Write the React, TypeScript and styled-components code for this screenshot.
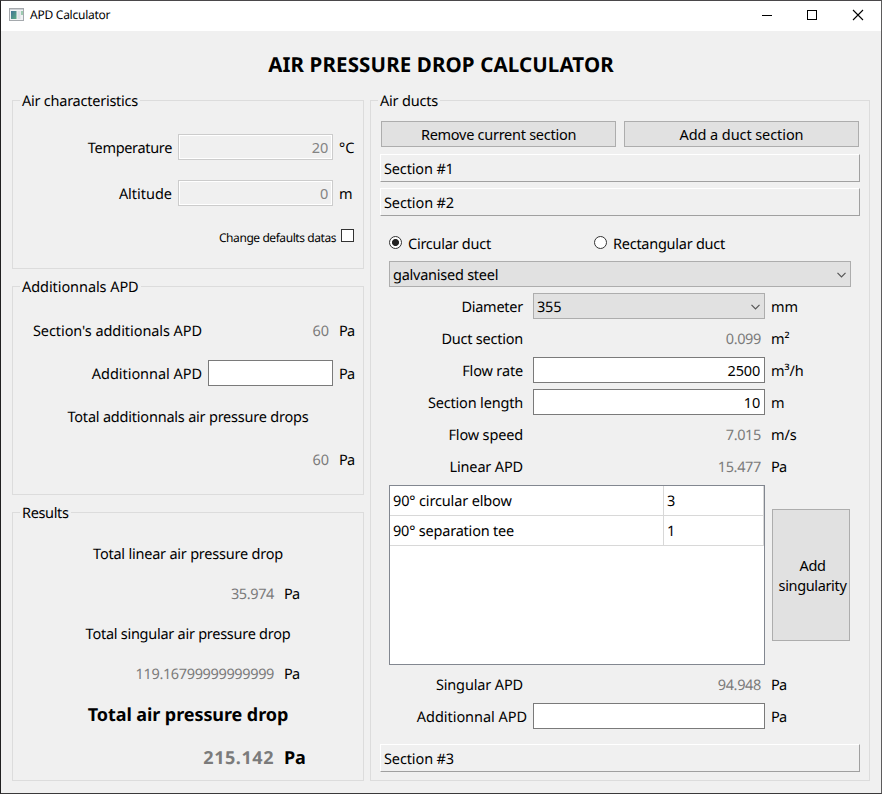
import React from "react";
import styled, { createGlobalStyle } from "styled-components";

const GlobalStyle = createGlobalStyle`
  * { box-sizing: border-box; }
  body {
    margin: 0;
    background: #f0f0f0;
    color: #000;
    font-family: "Noto Sans", "Open Sans", sans-serif;
    font-size: 14.5px;
    text-rendering: geometricPrecision;
  }
`;

const Window = styled.div`
  display: flex;
  flex-direction: column;
  width: 882px;
  height: 794px;
  border: 1px solid;
  border-color: #4a484a #5c5b5c #3a393a #201f20;
  background: #f0f0f0;
  overflow: hidden;
`;

const TitleBar = styled.header`
  display: flex;
  align-items: flex-start;
  flex: none;
  height: 30px;
  padding-left: 8px;
  background: #fff;
  font-size: 12px;
  line-height: 28px;
`;

const AppIcon = styled.svg`
  display: block;
  width: 15px;
  height: 13px;
  margin: 7px 6px 0 0;
`;

const WindowControls = styled.svg`
  display: block;
  margin-left: auto;
  width: 138px;
  height: 30px;
`;

const Text = styled.span<{ $track?: number }>`
  white-space: nowrap;
  letter-spacing: ${(p) => p.$track ?? -0.07}px;
`;

const Heading = styled.h1`
  flex: none;
  height: 69px;
  margin: 0;
  line-height: 69px;
  text-align: center;
  font-size: 20.5px;
  font-weight: 700;
`;

const Columns = styled.main`
  display: flex;
  gap: 6px;
  padding-left: 11px;
`;

const LeftColumn = styled.div`
  display: flex;
  flex-direction: column;
  gap: 17px;
  width: 352px;
`;

const Group = styled.section<{ $height: number; $width: number }>`
  display: flex;
  flex-direction: column;
  width: ${(p) => p.$width}px;
  height: ${(p) => p.$height}px;
  border: 1px solid #dcdcdc;
`;

const Legend = styled.h2<{ $space: number }>`
  align-self: flex-start;
  flex: none;
  height: 20px;
  margin: -10px 0 ${(p) => p.$space}px 7px;
  padding: 0 2px;
  background: #f0f0f0;
  font-size: inherit;
  font-weight: 400;
  line-height: 20px;
`;

const Fields = styled.div<{ $gap: number }>`
  display: flex;
  flex-direction: column;
  gap: ${(p) => p.$gap}px;
`;

const Row = styled.div<{ $cols: string }>`
  display: grid;
  grid-template-columns: ${(p) => p.$cols};
  column-gap: 6px;
  align-items: center;
  height: 26px;
  line-height: 24px;
  & > span, & > label, & > output { padding-top: 2px; }
`;

const Label = styled.label<{ $inset?: number }>`
  padding-right: ${(p) => p.$inset ?? 0}px;
  text-align: right;
  white-space: nowrap;
`;

const Output = styled.output`
  padding-right: 4px;
  color: #7b7b7b;
  text-align: right;
  white-space: nowrap;
`;

const Input = styled.input`
  width: 100%;
  height: 26px;
  padding: 0 4px;
  border: 1px solid #7a7a7a;
  border-radius: 0;
  outline: none;
  background: #fff;
  color: #000;
  font: inherit;
  letter-spacing: -0.2px;
  text-align: right;
  &:disabled {
    border-color: #cccccc;
    background: #f0f0f0;
    box-shadow: inset 0 0 0 1px #fff;
    color: #838383;
  }
`;

const Caption = styled.div`
  height: 26px;
  line-height: 28px;
  text-align: center;
`;

const CheckRow = styled.label`
  display: flex;
  align-items: center;
  justify-content: flex-end;
  gap: 5px;
  height: 26px;
  margin: 17px 9px 0 0;
  font-size: 12px;
  & > span { padding-top: 2px; }
`;

const CheckBox = styled.input`
  appearance: none;
  width: 13px;
  height: 13px;
  margin: 0 0 1px;
  border: 1px solid #333;
  background: #fff;
`;

const Results = styled.div`
  display: grid;
  grid-template-rows: 26px 26px 26px 26px;
  row-gap: 14px;
`;

const TotalBlock = styled.div`
  display: grid;
  row-gap: 17px;
  margin-top: 15px;
  font-size: 18px;
  font-weight: 700;
`;

const ButtonRow = styled.div`
  display: flex;
  gap: 8px;
  margin: 0 10px 7px;
`;

const Button = styled.button<{ $w: number; $h: number }>`
  flex: none;
  width: ${(p) => p.$w}px;
  height: ${(p) => p.$h}px;
  padding: 0;
  border: 1px solid #adadad;
  border-radius: 0;
  background: #e1e1e1;
  color: #000;
  font: inherit;
  line-height: 20px;
  white-space: nowrap;
`;

const SingularityButton = styled(Button)`
  padding-left: 3px;
`;

const ToolBox = styled.div`
  display: flex;
  flex-direction: column;
  margin: 0 9px;
`;

const SectionTab = styled.div`
  height: 28px;
  padding-left: 3px;
  border: 1px solid;
  border-color: #fff #a0a0a0 #a0a0a0 #fff;
  line-height: 29px;
  & + & { margin-top: 6px; }
`;

const Page = styled.div`
  display: flex;
  flex-direction: column;
  height: 528px;
  padding: 14px 9px 0;
`;

const RadioRow = styled.div`
  display: grid;
  grid-template-columns: 205px auto;
  height: 26px;
  margin-bottom: 5px;
`;

const RadioLabel = styled.label`
  display: flex;
  align-items: center;
  gap: 6px;
  line-height: 24px;
  & > span { padding-top: 2px; }
`;

const Radio = styled.input`
  appearance: none;
  width: 13px;
  height: 13px;
  margin: 0 0 1px;
  border: 1px solid #333;
  border-radius: 50%;
  background: #fff;
  &:checked { background: radial-gradient(circle, #222 0 3.1px, #fff 3.9px); }
`;

const Combo = styled.div`
  display: flex;
  align-items: center;
  justify-content: space-between;
  height: 26px;
  padding: 0 4px 0 3px;
  border: 1px solid #adadad;
  background: #e1e1e1;
  line-height: 22px;
  & > span { padding-top: 2px; }
`;

const Chevron = styled.svg`
  display: block;
  width: 9px;
  height: 6px;
  margin-top: 2px;
`;

const SingularityRow = styled.div`
  display: flex;
  align-items: center;
  gap: 7px;
  height: 180px;
  margin: 6px 0;
`;

const TableFrame = styled.div`
  flex: none;
  width: 376px;
  height: 180px;
  border: 1px solid #828790;
  background: #fff;
`;

const TableRow = styled.div`
  display: grid;
  grid-template-columns: 274px 100px;
`;

const Cell = styled.div`
  height: 30px;
  padding-left: 3px;
  border: solid #d8d8d8;
  border-width: 0 1px 1px 0;
  line-height: 31px;
`;

const CHARACTERISTICS = "159px 155px auto";
const ADDITIONALS = "189px 125px auto";
const RESULTS = "265px auto";
const DUCT = "138px 232px auto";

function ComboBox({ text, track }: { text: string; track?: number }) {
  return (
    <Combo role="combobox">
      <Text $track={track}>{text}</Text>
      <Chevron viewBox="0 0 9 6">
        <path d="M0.5 0.8 L4.5 4.8 L8.5 0.8" fill="none" stroke="#555" strokeWidth="1.2" />
      </Chevron>
    </Combo>
  );
}

function Pascal() {
  return <Text $track={-0.7}>Pa</Text>;
}

type Field = {
  label: string;
  track?: number;
  value: string;
  unit: string;
  kind: "input" | "output" | "combo";
  inset?: number;
};

function DuctField({ label, track, value, unit, kind, inset = 4 }: Field) {
  return (
    <Row $cols={DUCT}>
      <Label $inset={inset}><Text $track={track}>{label}</Text></Label>
      {kind === "combo" && <ComboBox text={value} track={-0.2} />}
      {kind === "output" && <Output><Text $track={-0.35}>{value}</Text></Output>}
      {kind === "input" && <Input defaultValue={value} />}
      {unit === "Pa" ? <Pascal /> : <Text>{unit}</Text>}
    </Row>
  );
}

const ductFields: Field[] = [
  { label: "Diameter", track: -0.25, value: "355", unit: "mm", kind: "combo" },
  { label: "Duct section", track: -0.23, value: "0.099", unit: "m²", kind: "output" },
  { label: "Flow rate", track: -0.15, value: "2500", unit: "m³/h", kind: "input" },
  { label: "Section length", track: -0.18, value: "10", unit: "m", kind: "input" },
  { label: "Flow speed", track: -0.15, value: "7.015", unit: "m/s", kind: "output" },
  { label: "Linear APD", track: -0.15, value: "15.477", unit: "Pa", kind: "output" },
];

export default function App() {
  return (
    <>
      <GlobalStyle />
      <Window>
        <TitleBar>
          <AppIcon viewBox="0 0 15 13">
            <defs>
              <linearGradient id="pane" x1="0" y1="0" x2="1" y2="1">
                <stop offset="0" stopColor="#3f7396" />
                <stop offset="1" stopColor="#5cab83" />
              </linearGradient>
            </defs>
            <rect x="0.5" y="0.5" width="14" height="12" fill="#f1f2f4" stroke="#a5a9ad" />
            <rect x="1" y="1" width="13" height="1" fill="#cdd1d5" />
            <rect x="2" y="3" width="5.5" height="8" fill="url(#pane)" />
            <rect x="8.5" y="3" width="3" height="8" fill="#dde1e6" />
            <rect x="12" y="3" width="2" height="4" fill="#9dcbb0" />
          </AppIcon>
          <Text $track={-0.25}>APD Calculator</Text>
          <WindowControls viewBox="0 0 138 30" fill="none" stroke="#000">
            <path d="M19 14.5 H29" />
            <rect x="64.5" y="9.5" width="9" height="9" />
            <path d="M110 9 L120 19 M120 9 L110 19" strokeWidth="1.1" />
          </WindowControls>
        </TitleBar>

        <Heading><Text $track={0.13}>AIR PRESSURE DROP CALCULATOR</Text></Heading>

        <Columns>
          <LeftColumn>
            <Group $width={352} $height={169}>
              <Legend $space={23}><Text $track={-0.24}>Air characteristics</Text></Legend>
              <Fields $gap={20}>
                <Row $cols={CHARACTERISTICS}>
                  <Label><Text $track={-0.33}>Temperature</Text></Label>
                  <Input disabled defaultValue="20" />
                  <Text>°C</Text>
                </Row>
                <Row $cols={CHARACTERISTICS}>
                  <Label><Text $track={-0.02}>Altitude</Text></Label>
                  <Input disabled defaultValue="0" />
                  <Text>m</Text>
                </Row>
              </Fields>
              <CheckRow>
                <Text $track={-0.43}>Change defaults datas</Text>
                <CheckBox type="checkbox" />
              </CheckRow>
            </Group>

            <Group $width={352} $height={209}>
              <Legend $space={20}><Text>Additionnals APD</Text></Legend>
              <Fields $gap={17}>
                <Row $cols={ADDITIONALS}>
                  <Label><Text>Section's additionals APD</Text></Label>
                  <Output>60</Output>
                  <Pascal />
                </Row>
                <Row $cols={ADDITIONALS}>
                  <Label><Text $track={-0.04}>Additionnal APD</Text></Label>
                  <Input />
                  <Pascal />
                </Row>
                <Caption><Text $track={-0.21}>Total additionnals air pressure drops</Text></Caption>
                <Row $cols={ADDITIONALS}>
                  <span />
                  <Output>60</Output>
                  <Pascal />
                </Row>
              </Fields>
            </Group>

            <Group $width={352} $height={269}>
              <Legend $space={17}><Text $track={-0.35}>Results</Text></Legend>
              <Results>
                <Caption><Text $track={-0.22}>Total linear air pressure drop</Text></Caption>
                <Row $cols={RESULTS}>
                  <Output><Text $track={-0.38}>35.974</Text></Output>
                  <Pascal />
                </Row>
                <Caption><Text $track={-0.26}>Total singular air pressure drop</Text></Caption>
                <Row $cols={RESULTS}>
                  <Output><Text $track={-0.36}>119.16799999999999</Text></Output>
                  <Pascal />
                </Row>
              </Results>
              <TotalBlock>
                <Caption><Text $track={-0.08}>Total air pressure drop</Text></Caption>
                <Row $cols={RESULTS}>
                  <Output><Text $track={0.55}>215.142</Text></Output>
                  <Text>Pa</Text>
                </Row>
              </TotalBlock>
            </Group>
          </LeftColumn>

          <Group $width={500} $height={681}>
            <Legend $space={10}><Text $track={-0.2}>Air ducts</Text></Legend>
            <ButtonRow>
              <Button $w={235} $h={26}><Text $track={-0.27}>Remove current section</Text></Button>
              <Button $w={235} $h={26}><Text $track={-0.08}>Add a duct section</Text></Button>
            </ButtonRow>
            <ToolBox>
              <SectionTab><Text $track={-0.15}>Section #1</Text></SectionTab>
              <SectionTab><Text $track={-0.12}>Section #2</Text></SectionTab>
              <Page>
                <RadioRow>
                  <RadioLabel>
                    <Radio type="radio" name="shape" defaultChecked />
                    <Text $track={-0.26}>Circular duct</Text>
                  </RadioLabel>
                  <RadioLabel>
                    <Radio type="radio" name="shape" />
                    <Text $track={-0.26}>Rectangular duct</Text>
                  </RadioLabel>
                </RadioRow>
                <Fields $gap={6}>
                  <ComboBox text="galvanised steel" track={-0.24} />
                  {ductFields.map((f) => <DuctField key={f.label} {...f} />)}
                </Fields>
                <SingularityRow>
                  <TableFrame>
                    <TableRow>
                      <Cell><Text $track={-0.14}>90° circular elbow</Text></Cell>
                      <Cell>3</Cell>
                    </TableRow>
                    <TableRow>
                      <Cell><Text $track={-0.2}>90° separation tee</Text></Cell>
                      <Cell>1</Cell>
                    </TableRow>
                  </TableFrame>
                  <SingularityButton $w={78} $h={132}>
                    <Text $track={-0.35}>Add<br />singularity</Text>
                  </SingularityButton>
                </SingularityRow>
                <Fields $gap={6}>
                  <DuctField label="Singular APD" track={-0.14} value="94.948" unit="Pa" kind="output" />
                  <DuctField label="Additionnal APD" track={-0.04} value="" unit="Pa" kind="input" inset={0} />
                </Fields>
              </Page>
              <SectionTab><Text $track={-0.12}>Section #3</Text></SectionTab>
            </ToolBox>
          </Group>
        </Columns>
      </Window>
    </>
  );
}
